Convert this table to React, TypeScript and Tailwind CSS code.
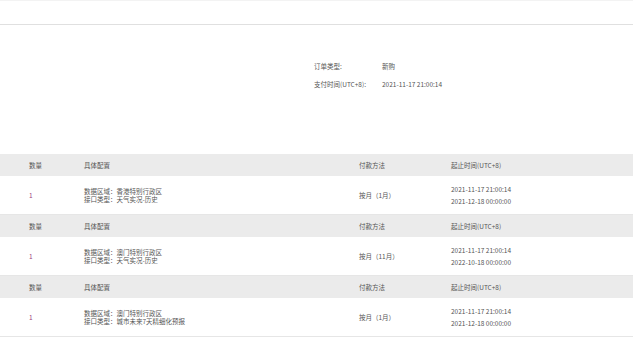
import React from "react";

const rows = [
  { region: "香港特别行政区", type: "天气实况-历史", pay: "按月（1月）", start: "2021-11-17 21:00:14", end: "2021-12-18 00:00:00" },
  { region: "澳门特别行政区", type: "天气实况-历史", pay: "按月（11月）", start: "2021-11-17 21:00:14", end: "2022-10-18 00:00:00" },
  { region: "澳门特别行政区", type: "城市未来7天精细化预报", pay: "按月（1月）", start: "2021-11-17 21:00:14", end: "2021-12-18 00:00:00" },
];

export default function App() {
  return (
    <div
      className="w-[633px] h-[339px] overflow-hidden bg-white text-[#555] text-[6.5px] leading-[8px]"
      style={{ fontFamily: '"Noto Sans CJK SC", "Noto Sans", sans-serif' }}
    >
      <div className="h-[1px] bg-[#f3f3f3]" />
      <div className="h-[23px]" />
      <div className="h-[1px] bg-[#e0e0e0]" />
      <div className="pl-[314px] pt-[37px] flex flex-col gap-[10px] h-[129px]">
        <div className="flex">
          <span className="w-[68px]">订单类型:</span>
          <span>新购</span>
        </div>
        <div className="flex">
          <span className="w-[68px]">支付时间(UTC+8):</span>
          <span>2021-11-17 21:00:14</span>
        </div>
      </div>
      {rows.map((r, i) => (
        <div key={i}>
          <div className="grid grid-cols-[84px_275px_92px_1fr] items-center h-[22px] bg-[#ebebeb]">
            <div className="pl-[29px]">数量</div>
            <div>具体配置</div>
            <div>付款方法</div>
            <div>起止时间(UTC+8)</div>
          </div>
          <div className="grid grid-cols-[84px_275px_92px_1fr] items-center h-[39px] border-b border-[#e6e6e6]">
            <div className="pl-[29px] text-[#a0407e]">1</div>
            <div className="flex flex-col">
              <span>数据区域：{r.region}</span>
              <span>接口类型：{r.type}</span>
            </div>
            <div>{r.pay}</div>
            <div className="flex flex-col gap-[4px]">
              <span>{r.start}</span>
              <span>{r.end}</span>
            </div>
          </div>
        </div>
      ))}
    </div>
  );
}
